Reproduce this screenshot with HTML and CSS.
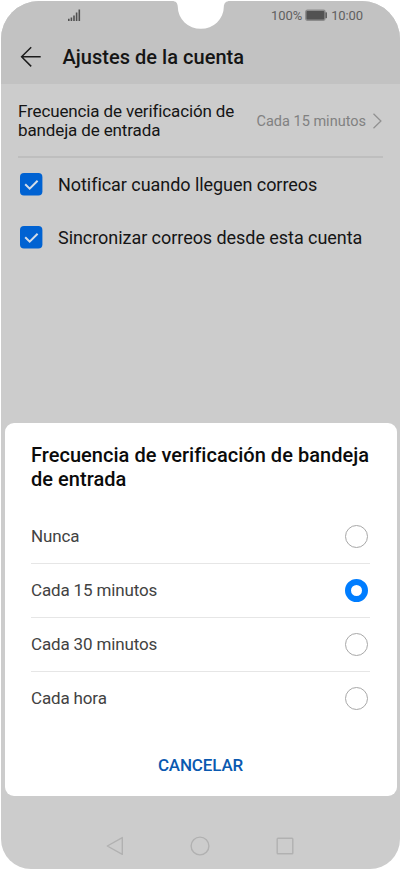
FILE: index.html
```html
<!DOCTYPE html>
<html lang="es">
<head>
    <meta charset="UTF-8">
    <meta name="viewport" content="width=device-width, initial-scale=1.0">
    <title>Ajustes de la cuenta</title>
    <link rel="stylesheet" href="styles.css">
</head>
<body>
    <div class="phone">
        <!-- Notch -->
        <svg class="notch" width="58" height="30" viewBox="0 0 58 30">
            <path d="M0 0V1C4 1 5.6 3 5.8 7A23 21.8 0 0 0 51.8 7C52 3 54 1 58 1V0Z" fill="#fff"/>
        </svg>

        <div class="header">
            <div class="status-bar">
                <svg class="signal" width="13" height="12" viewBox="0 0 13 12">
                    <path d="M.8 9.8V12M3.4 8.6V12M6 6.4V12M8.6 3.6V12M11.3 .5V12" stroke="#505050" stroke-width="1.6"/>
                </svg>
                <div class="status-right">
                    <span class="percent">100%</span>
                    <svg width="23" height="12" viewBox="0 0 23 12">
                        <rect x=".8" y="1.2" width="19.2" height="10" rx="1.6" fill="#525252" stroke="#8c8c8c" stroke-width="1.4"/>
                        <rect x="20.4" y="3.2" width="1.6" height="6" rx=".6" fill="#606060"/>
                    </svg>
                    <span class="time">10:00</span>
                </div>
            </div>
            <div class="title-bar">
                <svg width="22" height="22" viewBox="0 0 22 22">
                    <path d="M11.2 1.3L1.6 10.8L11.2 20.4M1.6 10.8H20.7" fill="none" stroke="#1c1c1c" stroke-width="1.5"/>
                </svg>
                <h1>Ajustes de la cuenta</h1>
            </div>
        </div>

        <div class="settings">
            <div class="frequency">
                <div class="frequency-label">Frecuencia de verificación de<br>bandeja de entrada</div>
                <div class="frequency-value">Cada 15 minutos</div>
                <svg width="10" height="16" viewBox="0 0 10 16">
                    <path d="M.5 .8L7.9 8L.5 15.2" fill="none" stroke="#929292" stroke-width="1.3"/>
                </svg>
            </div>
            <div class="check-row">
                <svg width="23" height="23" viewBox="0 0 23 23">
                    <rect width="22.4" height="22.4" rx="4" fill="#0062d2"/>
                    <path d="M5.2 11.2L9.7 15.7L17.6 7.7" fill="none" stroke="#d3dce8" stroke-width="2"/>
                </svg>
                <span>Notificar cuando lleguen correos</span>
            </div>
            <div class="check-row">
                <svg width="23" height="23" viewBox="0 0 23 23">
                    <rect width="22.4" height="22.4" rx="4" fill="#0062d2"/>
                    <path d="M5.2 11.2L9.7 15.7L17.6 7.7" fill="none" stroke="#d3dce8" stroke-width="2"/>
                </svg>
                <span>Sincronizar correos desde esta cuenta</span>
            </div>
        </div>

        <div class="nav-bar">
            <svg width="18" height="20" viewBox="0 0 18 20">
                <path d="M16.3 1.6V18.4L1.3 10Z" fill="none" stroke="#b1b1b1" stroke-width="1.4" stroke-linejoin="round"/>
            </svg>
            <svg width="20" height="20" viewBox="0 0 20 20">
                <circle cx="10" cy="10" r="8.9" fill="none" stroke="#b1b1b1" stroke-width="1.4"/>
            </svg>
            <svg width="18" height="18" viewBox="0 0 18 18">
                <rect x="1.2" y="1.2" width="15.6" height="15.6" rx=".8" fill="none" stroke="#b1b1b1" stroke-width="1.4"/>
            </svg>
        </div>

        <!-- Dialog -->
        <div class="dialog">
            <h2>Frecuencia de verificación de bandeja<br>de entrada</h2>
            <div class="option"><span>Nunca</span><div class="radio"></div></div>
            <div class="option"><span>Cada 15 minutos</span><div class="radio selected"></div></div>
            <div class="option"><span>Cada 30 minutos</span><div class="radio"></div></div>
            <div class="option"><span>Cada hora</span><div class="radio"></div></div>
            <div class="cancel"><span>CANCELAR</span></div>
        </div>
    </div>
</body>
</html>
```
FILE: styles.css
```css
* {
    box-sizing: border-box;
}

body {
    margin: 0;
    padding: 1px;
    background: #fff;
    font-family: Roboto, sans-serif;
}

svg {
    display: block;
    flex-shrink: 0;
}

.phone {
    position: relative;
    display: flex;
    flex-direction: column;
    width: 399px;
    height: 868px;
    background: #ccc;
    border-radius: 38px 38px 30px 30px;
    overflow: hidden;
}

.notch {
    position: absolute;
    top: -1px;
    left: 171px;
}

/* Header */
.header {
    height: 83px;
    background: #c2c2c2;
}

.status-bar {
    display: flex;
    justify-content: space-between;
    align-items: center;
    height: 28px;
    padding: 0 37px 0 67px;
}

.status-right {
    display: flex;
    align-items: center;
    gap: 3px;
    font-size: 13px;
    letter-spacing: -0.1px;
    color: #606060;
}

.title-bar {
    display: flex;
    align-items: center;
    gap: 20.5px;
    height: 56px;
    padding-left: 19px;
}

h1 {
    margin: 0;
    font-size: 20px;
    font-weight: 500;
    letter-spacing: 0.03px;
    color: #151515;
}

/* Settings list */
.settings {
    flex: 1;
    padding: 0 17px;
}

.frequency {
    display: flex;
    align-items: center;
    height: 74px;
    padding-top: 2px;
    border-bottom: 2px solid #bebebe;
    white-space: nowrap;
}

.frequency-label {
    flex: 1;
    font-size: 17px;
    line-height: 19.5px;
    letter-spacing: -0.13px;
    color: #151515;
}

.frequency-value {
    margin-right: 6px;
    padding-right: 1px;
    font-size: 14.5px;
    color: #818181;
}

.check-row {
    display: flex;
    align-items: center;
    gap: 15px;
    height: 53.3px;
    padding-left: 2px;
    font-size: 18px;
    letter-spacing: -0.05px;
    color: #151515;
    white-space: nowrap;
}

/* Navigation */
.nav-bar {
    display: flex;
    align-items: center;
    justify-content: center;
    gap: 66px;
    height: 46px;
    padding: 0 1px 0 0;
}

/* Dialog */
.dialog {
    position: absolute;
    top: 421.5px;
    left: 3.5px;
    width: 392px;
    height: 373.5px;
    padding: 20px 26.5px 0;
    background: #fff;
    border-radius: 9px;
}

h2 {
    height: 67px;
    margin: 0;
    font-size: 20px;
    font-weight: 500;
    line-height: 24px;
    letter-spacing: 0.03px;
    color: #0b0b0b;
    white-space: nowrap;
}

.option {
    display: flex;
    align-items: center;
    justify-content: space-between;
    height: 54px;
    padding-right: 2px;
    border-bottom: 1px solid #e6e6e6;
    font-size: 17px;
    letter-spacing: -0.15px;
    color: #424242;
}

.option:nth-child(5) {
    border-bottom-color: transparent;
}

.radio {
    width: 23px;
    height: 23px;
    border: 1px solid #a8a8a8;
    border-radius: 50%;
}

.radio.selected {
    border: 6px solid #007dff;
}

.cancel {
    display: flex;
    align-items: center;
    justify-content: center;
    height: 78px;
    font-size: 17px;
    font-weight: 500;
    letter-spacing: -0.15px;
    color: #0a59b0;
}
```
